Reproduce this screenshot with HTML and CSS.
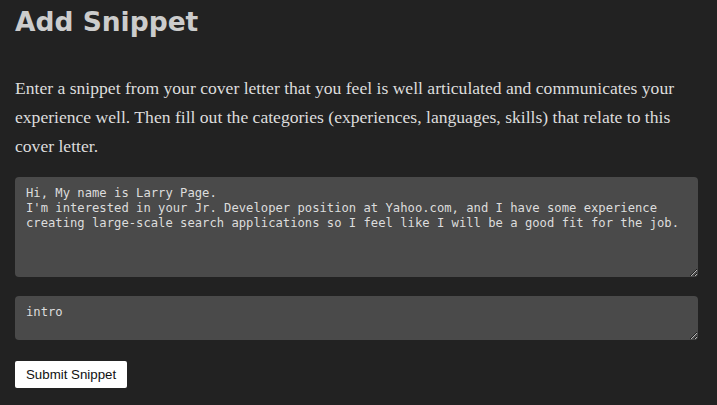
FILE: index.html
```html
<!DOCTYPE html>
<html>
<head>
<meta charset="utf-8">
<link rel="stylesheet" href="styles.css">
</head>
<body>
<main class="page">
  <h1 class="title">Add Snippet</h1>
  <p class="intro">Enter a snippet from your cover letter that you feel is well articulated and communicates your experience well. Then fill out the categories (experiences, languages, skills) that relate to this cover letter.</p>
  <form class="form">
    <textarea class="field field-body">Hi, My name is Larry Page.
I'm interested in your Jr. Developer position at Yahoo.com, and I have some experience creating large-scale search applications so I feel like I will be a good fit for the job.</textarea>
    <textarea class="field field-cat">intro</textarea>
    <button type="button" class="submit">Submit Snippet</button>
  </form>
</main>
</body>
</html>
```
FILE: styles.css
```css
html, body {
  margin: 0;
  padding: 0;
  background: #222222;
}
.page {
  padding: 0 19px 0 15px;
}
.title {
  margin: 0;
  padding-top: 4px;
  font-family: "DejaVu Sans", Verdana, sans-serif;
  font-weight: bold;
  font-size: 26.5px;
  line-height: 36px;
  color: #cccccc;
}
.intro {
  margin: 34px 0 0 0;
  font-family: "Liberation Serif", "Times New Roman", serif;
  font-size: 17.6px;
  line-height: 29px;
  color: #dddddd;
}
.form {
  display: flex;
  flex-direction: column;
  align-items: flex-start;
  margin-top: 16px;
}
.field {
  box-sizing: border-box;
  width: 100%;
  display: block;
  background: #4a4a4a;
  color: #dddddd;
  border: none;
  border-radius: 4px;
  padding: 9px 11px;
  font-family: "DejaVu Sans Mono", monospace;
  font-size: 12.2px;
  line-height: 15px;
  outline: none;
}
.field-body {
  height: 100px;
}
.field-cat {
  margin-top: 19px;
  height: 44px;
}
.submit {
  margin-top: 21px;
  background: #ffffff;
  color: #111111;
  border: none;
  border-radius: 2px;
  padding: 0 11px;
  height: 27px;
  font-family: "Liberation Sans", Arial, sans-serif;
  font-size: 13.3px;
}
```
